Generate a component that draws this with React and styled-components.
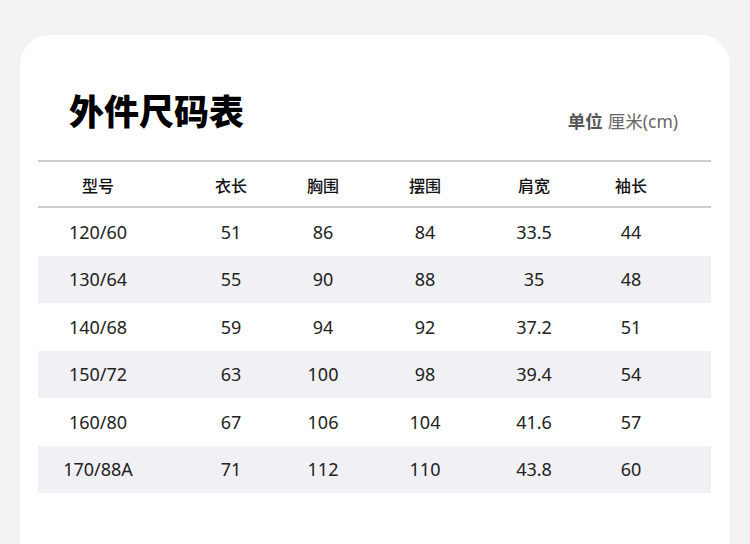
import React from 'react'
import styled, { createGlobalStyle } from 'styled-components'

const GlobalStyle = createGlobalStyle`
  html, body {
    margin: 0;
    padding: 0;
    background: #f3f2f5;
    font-family: "Noto Sans", "Noto Sans CJK SC", sans-serif;
  }
`

const Page = styled.div`
  width: 750px;
  height: 544px;
  overflow: hidden;
  padding: 35px 20px 0;
  box-sizing: border-box;
  background: #f3f2f5;
`

const Card = styled.div`
  background: #ffffff;
  border-radius: 30px 30px 0 0;
  height: 560px;
  padding: 0 19px 0 18px;
`

const TitleRow = styled.div`
  height: 125px;
  display: flex;
  align-items: flex-end;
  justify-content: space-between;
  padding: 0 33px 30px 31px;
  box-sizing: border-box;
`

const Title = styled.h1`
  margin: 0 0 3px;
  font-family: "Noto Sans CJK SC", sans-serif;
  font-weight: 900;
  font-size: 35px;
  line-height: 1;
  color: #000;
`

const Unit = styled.div`
  font-size: 17.5px;
  line-height: 1;
  color: #666;

  b {
    font-family: "Noto Sans CJK SC", sans-serif;
    font-weight: 700;
    color: #555;
    margin-right: 5px;
  }
`

const Table = styled.div`
  border-top: 2px solid #cccccc;
`

const Row = styled.div`
  display: grid;
  grid-template-columns: 120px 146px 38px 166px 52px 142px 1fr;
  align-items: center;
  height: ${p => (p.$head ? '44px' : '47.5px')};
  background: ${p => (p.$shaded ? '#f1f0f4' : 'transparent')};
  border-bottom: ${p => (p.$head ? '2px solid #cccccc' : 'none')};
`

const Cell = styled.div`
  text-align: center;
  white-space: nowrap;
  justify-self: center;
  font-size: ${p => (p.$head ? '16px' : '18px')};
  font-weight: ${p => (p.$head ? 500 : 400)};
  font-family: ${p => (p.$head ? '"Noto Sans CJK SC", sans-serif' : '"Noto Sans", "Noto Sans CJK SC", sans-serif')};
  color: ${p => (p.$head ? '#111' : '#222')};
  margin-top: ${p => (p.$head ? '1px' : '0')};
`

const headers = ['型号', '衣长', '胸围', '摆围', '肩宽', '袖长']

const rows = [
  ['120/60', '51', '86', '84', '33.5', '44'],
  ['130/64', '55', '90', '88', '35', '48'],
  ['140/68', '59', '94', '92', '37.2', '51'],
  ['150/72', '63', '100', '98', '39.4', '54'],
  ['160/80', '67', '106', '104', '41.6', '57'],
  ['170/88A', '71', '112', '110', '43.8', '60'],
]

const App = () => {
  return (
    <Page>
      <GlobalStyle />
      <Card>
        <TitleRow>
          <Title>外件尺码表</Title>
          <Unit><b>单位</b>厘米(cm)</Unit>
        </TitleRow>
        <Table>
          <Row $head>
            {headers.map(h => <Cell key={h} $head>{h}</Cell>)}
          </Row>
          {rows.map((r, i) => (
            <Row key={r[0]} $shaded={i % 2 === 1}>
              {r.map((v, j) => <Cell key={j}>{v}</Cell>)}
            </Row>
          ))}
        </Table>
      </Card>
    </Page>
  )
}

export default App
